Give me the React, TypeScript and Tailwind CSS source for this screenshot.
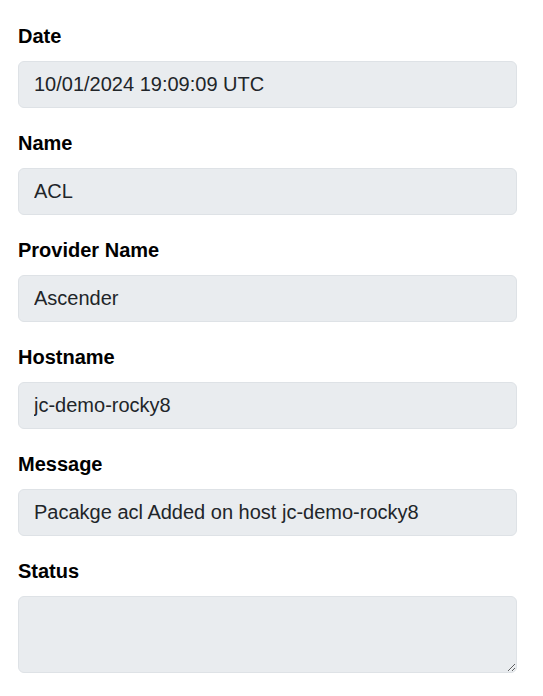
export default function App() {
  const fields = [
    { label: "Date", value: "10/01/2024 19:09:09 UTC" },
    { label: "Name", value: "ACL" },
    { label: "Provider Name", value: "Ascender" },
    { label: "Hostname", value: "jc-demo-rocky8" },
    { label: "Message", value: "Pacakge acl Added on host jc-demo-rocky8" },
  ]

  return (
    <div
      className="min-h-screen bg-white pl-[18px] pt-[21px] text-[#212529]"
      style={{ fontFamily: '"Liberation Sans", Arial, sans-serif' }}
    >
      <div className="w-[499px]">
        {fields.map((f) => (
          <div key={f.label} className="mb-[20px]">
            <label className="mb-[10px] block text-[20px] font-bold leading-[30px] text-black">
              {f.label}
            </label>
            <input
              readOnly
              value={f.value}
              className="block h-[47px] w-full rounded-[6px] border border-[#dee2e6] bg-[#e9ecef] px-[15px] text-[20px] text-[#212529] outline-none"
            />
          </div>
        ))}
        <div>
          <label className="mb-[10px] block text-[20px] font-bold leading-[30px] text-black">
            Status
          </label>
          <textarea
            readOnly
            className="block h-[77px] w-full rounded-[6px] border border-[#dee2e6] bg-[#e9ecef] px-[15px] text-[20px] text-[#212529] outline-none"
          />
        </div>
      </div>
    </div>
  )
}
